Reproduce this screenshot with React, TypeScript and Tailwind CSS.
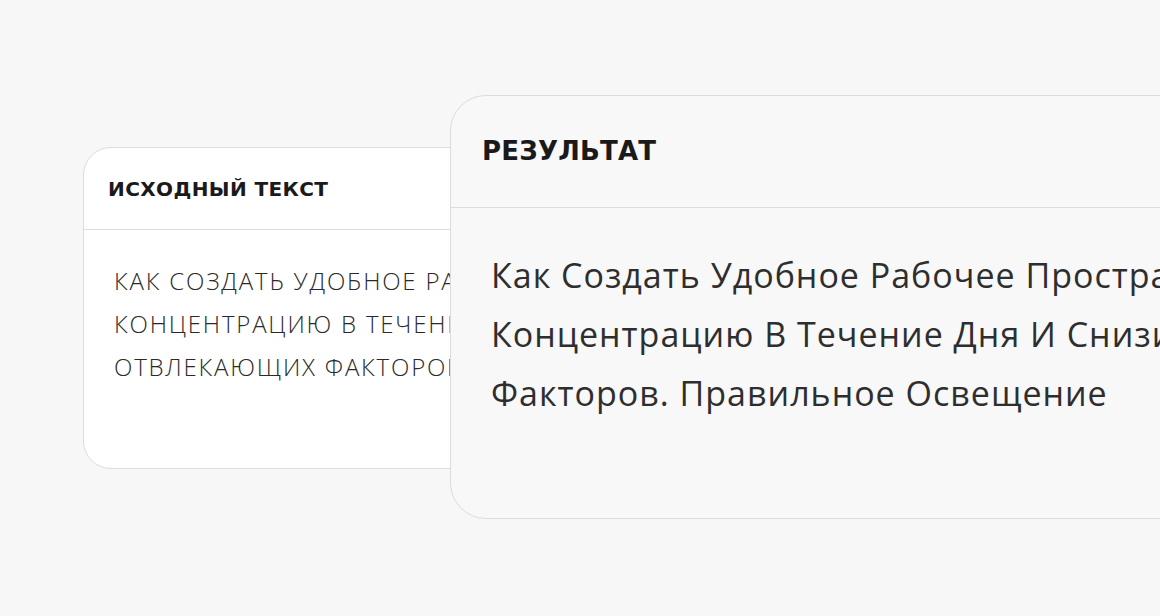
const sourceLines = [
  "КАК СОЗДАТЬ УДОБНОЕ РАБОЧЕЕ ПРОСТРАНСТВО ДОМА, ЧТОБЫ СОХРАНИТЬ",
  "КОНЦЕНТРАЦИЮ В ТЕЧЕНИЕ ДНЯ И СНИЗИТЬ КОЛИЧЕСТВО",
  "ОТВЛЕКАЮЩИХ ФАКТОРОВ. ПРАВИЛЬНОЕ ОСВЕЩЕНИЕ",
];

const resultLines = [
  "Как Создать Удобное Рабочее Пространство Дома, Чтобы Сохранить",
  "Концентрацию В Течение Дня И Снизить Количество Отвлекающих",
  "Факторов. Правильное Освещение",
];

export default function App() {
  return (
    <div className="h-[616px] w-[1160px] overflow-hidden bg-[#f7f7f7] font-['Open_Sans',sans-serif] text-[#222]">
      <div className="flex items-start pl-[83px]">
        {/* source card, sits under the result card */}
        <div className="mt-[147px] h-[322px] w-[420px] shrink-0 overflow-hidden rounded-[28px] border border-[#dcdcdc] bg-white">
          <div className="flex h-[82px] items-center border-b border-[#dcdcdc] pl-[24px]">
            <h2 className="font-['DejaVu_Sans',sans-serif] text-[20px] font-bold tracking-[0.4px] text-[#1a1a1a]">ИСХОДНЫЙ ТЕКСТ</h2>
          </div>
          <div className="pl-[30px] pt-[29px] text-[24px] leading-[43px] font-light tracking-[1.8px] text-[#2a2a2a]">
            {sourceLines.map((l) => (
              <div key={l} className="whitespace-nowrap">{l}</div>
            ))}
          </div>
        </div>

        <div className="relative z-10 -ml-[53px] mt-[95px] h-[424px] w-[760px] shrink-0 overflow-hidden rounded-[36px] border-[1.5px] border-[#dcdcdc] bg-[#f8f8f8]">
          <div className="flex h-[112px] items-center border-b-[1.5px] border-[#dcdcdc] pl-[31px]">
            <h2 className="font-['DejaVu_Sans',sans-serif] text-[26px] font-bold tracking-[0.2px] text-[#1a1a1a]">РЕЗУЛЬТАТ</h2>
          </div>
          <div className="pl-[40px] pt-[38px] text-[34px] leading-[59px] font-normal tracking-[1px] text-[#2e2e2e]">
            {resultLines.map((l) => (
              <div key={l} className="whitespace-nowrap">{l}</div>
            ))}
          </div>
        </div>
      </div>
    </div>
  );
}
